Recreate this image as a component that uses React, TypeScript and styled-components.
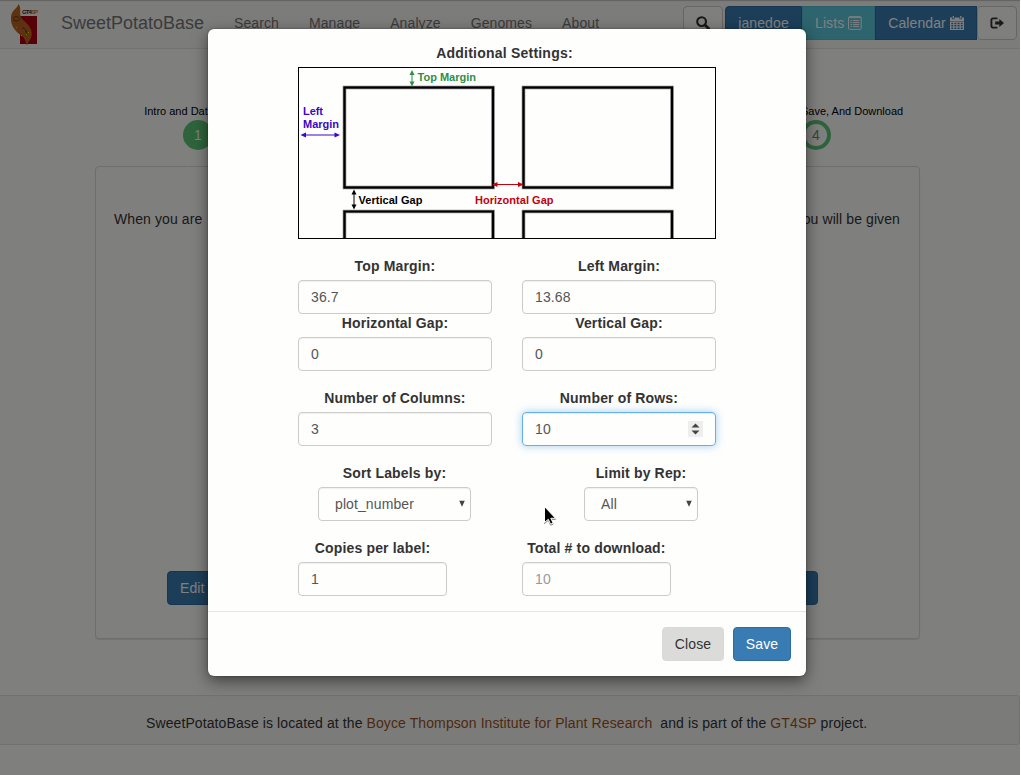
import React from "react";
import styled, { createGlobalStyle } from "styled-components";

const Global = createGlobalStyle`
  * { box-sizing: border-box; }
  html, body { margin: 0; padding: 0; background: #fefefd; overflow: hidden; }
  body { font: 14px/20px "Liberation Sans", Arial, sans-serif; letter-spacing: 0.1px; color: #333; }
`;

const Screen = styled.div`
  position: relative;
  width: 1020px;
  height: 775px;
  overflow: hidden;
  background: #fefefc;
`;
const Page = styled.div`
  display: flex;
  flex-direction: column;
  height: 775px;
`;
const Navbar = styled.nav`
  display: flex;
  align-items: flex-start;
  flex: none;
  height: 49px;
  border-bottom: 1px solid #e4e4e2;
  background: #f9f9f7;
  box-shadow: inset 0 2px 1px -1px #c4c4c2;
  color: #777;
  white-space: nowrap;
`;
const Logo = styled.svg`
  flex: none;
  width: 46px;
  height: 48px;
`;
const Brand = styled.span`
  width: 173px;
  padding: 13px 15px;
  font-size: 18px;
  letter-spacing: 0;
`;
const NavLink = styled.span`
  padding: 13px 15px;
`;
const NavActions = styled.div`
  display: flex;
  margin: 6px 3px 0 auto;
`;
const Button = styled.button<{ $tone?: "primary" | "info" | "plain" | "muted"; $width?: number; $radius?: string }>`
  display: flex;
  align-items: center;
  justify-content: center;
  gap: 4px;
  height: 34px;
  width: ${(p) => (p.$width ? `${p.$width}px` : "auto")};
  padding: 0 12px;
  border: 1px solid;
  border-radius: ${(p) => p.$radius ?? "4px"};
  font: inherit;
  letter-spacing: inherit;
  white-space: nowrap;
  ${(p) =>
    ({
      primary: "background:#387cb3;border-color:#2e6da4;color:#fff;",
      info: "background:#5bc8da;border-color:#50bfd2;color:#fff;",
      plain: "background:#fefefc;border-color:#ccc;color:#333;",
      muted: "background:#dbdbda;border-color:#d9d9d8;color:#333;",
    })[p.$tone ?? "primary"]}
`;
const SearchButton = styled(Button)`
  margin-right: 2px;
`;
const Steps = styled.div`
  display: flex;
  justify-content: space-between;
  width: 825px;
  height: 117px;
  margin-left: 95px;
  padding: 52px 0 0;
`;
const Step = styled.div<{ $width: number }>`
  display: flex;
  flex-direction: column;
  align-items: center;
  width: ${(p) => p.$width}px;
  color: #000;
  font-size: 11px;
  letter-spacing: 0;
  white-space: nowrap;
`;
const StepDot = styled.span<{ $filled?: boolean }>`
  display: flex;
  align-items: center;
  justify-content: center;
  width: 30px;
  height: 30px;
  margin-top: -1px;
  border: 4px solid #5cc878;
  border-radius: 50%;
  background: ${(p) => (p.$filled ? "#5cc878" : "transparent")};
  color: ${(p) => (p.$filled ? "#fff" : "#4f9968")};
  font-size: 14px;
`;
const Panel = styled.section`
  display: flex;
  flex-direction: column;
  justify-content: space-between;
  width: 825px;
  height: 473px;
  margin-left: 95px;
  padding: 42px 19px 33px 18px;
  border: 1px solid #dcdcda;
  border-radius: 4px;
  box-shadow: 0 1px 1px rgba(0, 0, 0, 0.1);
`;
const SplitLine = styled.div`
  display: flex;
  justify-content: space-between;
`;
const PanelActions = styled(SplitLine)`
  padding: 0 82px 0 53px;
`;
const FooterBar = styled.footer`
  width: 1020px;
  height: 50px;
  margin-top: 56px;
  padding: 17px 0 0 146px;
  border: 1px solid #e3e3e1;
  border-left: 0;
  border-radius: 0 4px 4px 0;
  background: #f7f7f5;
  white-space: pre;
`;
const FooterLink = styled.a`
  color: #9a5420;
`;
const Backdrop = styled.div`
  position: absolute;
  inset: 0;
  background: rgba(0, 0, 0, 0.5);
`;
const Dialog = styled.div`
  position: absolute;
  left: 208px;
  top: 29px;
  width: 598px;
  height: 647px;
  border-radius: 6px;
  background: #fefefd;
  box-shadow: 0 5px 15px rgba(0, 0, 0, 0.5), 0 0 2px rgba(0, 0, 0, 0.4);
`;
const DialogBody = styled.div`
  height: 582px;
  padding: 14px 90px 0;
`;
const DialogTitle = styled.div`
  width: 413px;
  height: 24px;
  font-weight: 700;
  letter-spacing: 0.22px;
  text-align: center;
`;
const Diagram = styled.svg`
  display: block;
  width: 418px;
  height: 172px;
  border: 1px solid #000;
  font: 700 11px "Liberation Sans", Arial, sans-serif;
  letter-spacing: 0;
`;
const FieldRow = styled.div<{ $gap: number }>`
  display: grid;
  grid-template-columns: 194px 194px;
  column-gap: 30px;
  margin-top: ${(p) => p.$gap}px;
`;
const Field = styled.div<{ $width?: number; $indent?: number }>`
  display: flex;
  flex-direction: column;
  width: ${(p) => p.$width ?? 194}px;
  margin-left: ${(p) => p.$indent ?? 0}px;
`;
const FieldLabel = styled.label`
  height: 24px;
  font-weight: 700;
  letter-spacing: 0.16px;
  text-align: center;
  white-space: nowrap;
`;
const Control = styled.div<{ $focused?: boolean; $muted?: boolean; $select?: boolean }>`
  display: flex;
  align-items: center;
  justify-content: space-between;
  height: 34px;
  padding: ${(p) => (p.$select ? "0 4px 0 16px" : "0 12px")};
  border: 1px solid ${(p) => (p.$focused ? "#66afe9" : "#ccc")};
  border-radius: 4px;
  color: ${(p) => (p.$muted ? "#999" : "#555")};
  box-shadow: ${(p) =>
    p.$focused
      ? "inset 0 1px 1px rgba(0,0,0,.075), 0 0 8px rgba(102,175,233,.6)"
      : "inset 0 1px 1px rgba(0,0,0,.06)"};
`;
const DialogFooter = styled.div`
  display: flex;
  justify-content: flex-end;
  gap: 9px;
  height: 65px;
  padding: 15px 15px 0;
  border-top: 1px solid #e5e5e5;
`;
const Pointer = styled.svg`
  position: absolute;
  left: 543px;
  top: 505px;
  filter: drop-shadow(0.5px 1px 0.6px rgba(0, 0, 0, 0.5));
`;

const SearchIcon = () => (
  <svg width="14" height="14" viewBox="0 0 14 14" fill="none" stroke="#333">
    <circle cx="5.6" cy="5.6" r="4.4" strokeWidth="2.1" />
    <path d="M9 9l3.8 3.8" strokeWidth="2.8" strokeLinecap="round" />
  </svg>
);
const ListIcon = () => (
  <svg width="14" height="14" viewBox="0 0 14 14" fill="none" stroke="#fff">
    <rect x=".5" y=".5" width="13" height="13" rx="1" />
    <path d="M1 1.5h12M2.600 4.500h1.500M2.600 6.500h1.500M2.600 8.500h1.500M2.600 10.500h1.500M5 4.500h6.500M5 6.500h6.500M5 8.500h6.500M5 10.500h6.500" />
  </svg>
);
const CalendarIcon = () => (
  <svg width="14" height="14" viewBox="0 0 14 14" fill="#fff">
    <path d="M0 1.500h2V3.200h2.500V1.500h5V3.200H12V1.500h2V5H0zM2.600 0h1.300v2.600H2.600zM10.100 0h1.300v2.600h-1.300z" />
    <path
      fillRule="evenodd"
      d="M0 5.600h14V14H0zM1.300 6.800v1.500h1.900V6.800zM4.400 6.800v1.500h2V6.800zM7.600 6.800v1.500h2V6.800zM10.800 6.800v1.500h1.900V6.800zM1.300 9.100v1.500h1.900V9.100zM4.400 9.100v1.500h2V9.100zM7.600 9.100v1.500h2V9.100zM10.800 9.100v1.500h1.900V9.100zM1.300 11.400v1.500h1.900v-1.500zM4.400 11.400v1.500h2v-1.500zM7.600 11.400v1.500h2v-1.500zM10.800 11.400v1.500h1.900v-1.500z"
    />
  </svg>
);
const LogoutIcon = () => (
  <svg width="15" height="14" viewBox="0 0 15 14">
    <path fill="none" stroke="#333" strokeWidth="2" d="M8 2H3.500Q1.500 2 1.500 4v6q0 2 2 2H8" />
    <path fill="#333" d="M5.500 5.400h4.500V2.600L15 7l-5 4.400V8.600H5.500z" />
  </svg>
);
const Caret = () => (
  <svg width="8" height="8" viewBox="0 0 8 8">
    <path fill="#444" d="M1.200 .8h5.600L4 6.800z" />
  </svg>
);
const Spinner = () => (
  <svg width="15" height="16" viewBox="0 0 15 16">
    <path fill="#eeeeed" d="M0 0h15v16H0z" />
    <path fill="#444" d="M3.500 6.500h8L7.500 2.500zM3.500 9.500h8l-4 4z" />
  </svg>
);

const LabelOutlines = () => (
  <>
    <rect x="45.500" y="19.500" width="148.500" height="100" />
    <rect x="224.500" y="19.500" width="148.500" height="100" />
    <path d="M45.500 171V143.500h148.500V171M224.500 171V143.500h148.500V171" />
  </>
);

const MarginDiagram = () => (
  <Diagram viewBox="0 0 416 170">
    <g fill="none" stroke="#000" strokeWidth="3.6" opacity=".45">
      <LabelOutlines />
    </g>
    <g fill="none" stroke="#000" strokeWidth="2.2">
      <LabelOutlines />
    </g>
    <g fill="#2f8f46">
      <rect x="112.500" y="5" width="1" height="10" />
      <path d="M110.500 7L113 2l2.500 5z" />
      <path d="M110.500 13.500h5L113 18.500z" />
      <text x="118.500" y="13" textLength="58.500">Top Margin</text>
    </g>
    <g fill="#3c06c8">
      <text x="4" y="47" textLength="20">Left</text>
      <text x="4" y="60" textLength="36">Margin</text>
      <rect x="5" y="66.500" width="32" height="1" />
      <path d="M7 64.500L1.500 67 7 69.500z" />
      <path d="M35.500 64.500L41 67l-5.500 2.500z" />
    </g>
    <g fill="#000">
      <rect x="54.500" y="125" width="1" height="13" />
      <path d="M52.500 126.500L55 121.500l2.500 5z" />
      <path d="M52.500 136.500h5L55 141.500z" />
      <text x="59.500" y="136" textLength="64">Vertical Gap</text>
    </g>
    <g fill="#c4000f">
      <rect x="196" y="116" width="25" height="1" />
      <path d="M198.500 114L193 116.500l5.500 2.500z" />
      <path d="M219 114l5.500 2.500L219 119z" />
      <text x="176" y="136" textLength="78.500">Horizontal Gap</text>
    </g>
  </Diagram>
);

export default function App() {
  return (
    <Screen>
      <Global />
      <Page>
        <Navbar>
          <Logo viewBox="0 0 46 48">
            <path fill="#ad0010" d="M20 16h17v28H20z" />
            <path
              fill="#ba6420"
              d="M18.500 4C17 9 11.500 10 11 17c-.3 6 1.500 10 5 14 3 3.500 6 4 8 7 1.500 2.500 1.500 5 3 7.500 1-4 4.500-6 4.800-11 .2-4.500-2-8-5-11-3-3.500-6-4-6.500-9-.3-4 .7-7-1.800-10.500z"
            />
            <path fill="none" stroke="#6c3c16" d="M13 18q3-3 6-.5t-3 3.500q-3 0-2.500-2M23 27q4 3 4 8" />
            <path fill="#f3df00" d="M16 27h1v1h-1zM21 35h1v1h-1zM26 34h1v1h-1zM28 32h1v1h-1z" />
            <path fill="#d01020" d="M22 28h1v1h-1zM25 31h1v1h-1z" />
            <text x="22" y="13.500" fontSize="6" fontWeight="700" letterSpacing="0" fill="#3b2020" textLength="16">
              GT4<tspan fill="#c07038">SP</tspan>
            </text>
          </Logo>
          <Brand>SweetPotatoBase</Brand>
          <NavLink>Search</NavLink>
          <NavLink>Manage</NavLink>
          <NavLink>Analyze</NavLink>
          <NavLink>Genomes</NavLink>
          <NavLink>About</NavLink>
          <NavActions>
            <SearchButton $tone="plain" $width={40}><SearchIcon /></SearchButton>
            <Button $width={77} $radius="4px 0 0 4px">janedoe</Button>
            <Button $tone="info" $width={73} $radius="0">Lists <ListIcon /></Button>
            <Button $width={102} $radius="0">Calendar <CalendarIcon /></Button>
            <Button $tone="plain" $width={40}><LogoutIcon /></Button>
          </NavActions>
        </Navbar>
        <Steps>
          <Step $width={206}>
            Intro and Data Source
            <StepDot $filled>1</StepDot>
          </Step>
          <Step $width={208}>
            More Options, Save, And Download
            <StepDot>4</StepDot>
          </Step>
        </Steps>
        <Panel>
          <SplitLine>
            <span>When you are</span>
            <span>you will be given</span>
          </SplitLine>
          <PanelActions>
            <Button>Edit</Button>
            <Button>Next</Button>
          </PanelActions>
        </Panel>
        <FooterBar>
          SweetPotatoBase is located at the <FooterLink>Boyce Thompson Institute for Plant Research</FooterLink>
          {"  and is part of the "}
          <FooterLink>GT4SP</FooterLink> project.
        </FooterBar>
      </Page>
      <Backdrop />
      <Dialog>
        <DialogBody>
          <DialogTitle>Additional Settings:</DialogTitle>
          <MarginDiagram />
          <FieldRow $gap={17}>
            <Field><FieldLabel>Top Margin:</FieldLabel><Control>36.7</Control></Field>
            <Field><FieldLabel>Left Margin:</FieldLabel><Control>13.68</Control></Field>
          </FieldRow>
          <FieldRow $gap={-1}>
            <Field><FieldLabel>Horizontal Gap:</FieldLabel><Control>0</Control></Field>
            <Field><FieldLabel>Vertical Gap:</FieldLabel><Control>0</Control></Field>
          </FieldRow>
          <FieldRow $gap={17}>
            <Field><FieldLabel>Number of Columns:</FieldLabel><Control>3</Control></Field>
            <Field><FieldLabel>Number of Rows:</FieldLabel><Control $focused>10<Spinner /></Control></Field>
          </FieldRow>
          <FieldRow $gap={17}>
            <Field $width={153} $indent={20}>
              <FieldLabel>Sort Labels by:</FieldLabel>
              <Control $select>plot_number<Caret /></Control>
            </Field>
            <Field $width={114} $indent={62}>
              <FieldLabel>Limit by Rep:</FieldLabel>
              <Control $select>All<Caret /></Control>
            </Field>
          </FieldRow>
          <FieldRow $gap={17}>
            <Field $width={149}><FieldLabel>Copies per label:</FieldLabel><Control>1</Control></Field>
            <Field $width={149}><FieldLabel>Total # to download:</FieldLabel><Control $muted>10</Control></Field>
          </FieldRow>
        </DialogBody>
        <DialogFooter>
          <Button $tone="muted" $width={62}>Close</Button>
          <Button $width={58}>Save</Button>
        </DialogFooter>
      </Dialog>
      <Pointer width="14" height="22" viewBox="0 0 14 22">
        <path fill="#000" stroke="#fff" strokeWidth="1" d="M1.500 1.500v16l3.800-3.200 2.300 4.900 2.500-1.100-2.300-4.800h4.700z" />
      </Pointer>
    </Screen>
  );
}
